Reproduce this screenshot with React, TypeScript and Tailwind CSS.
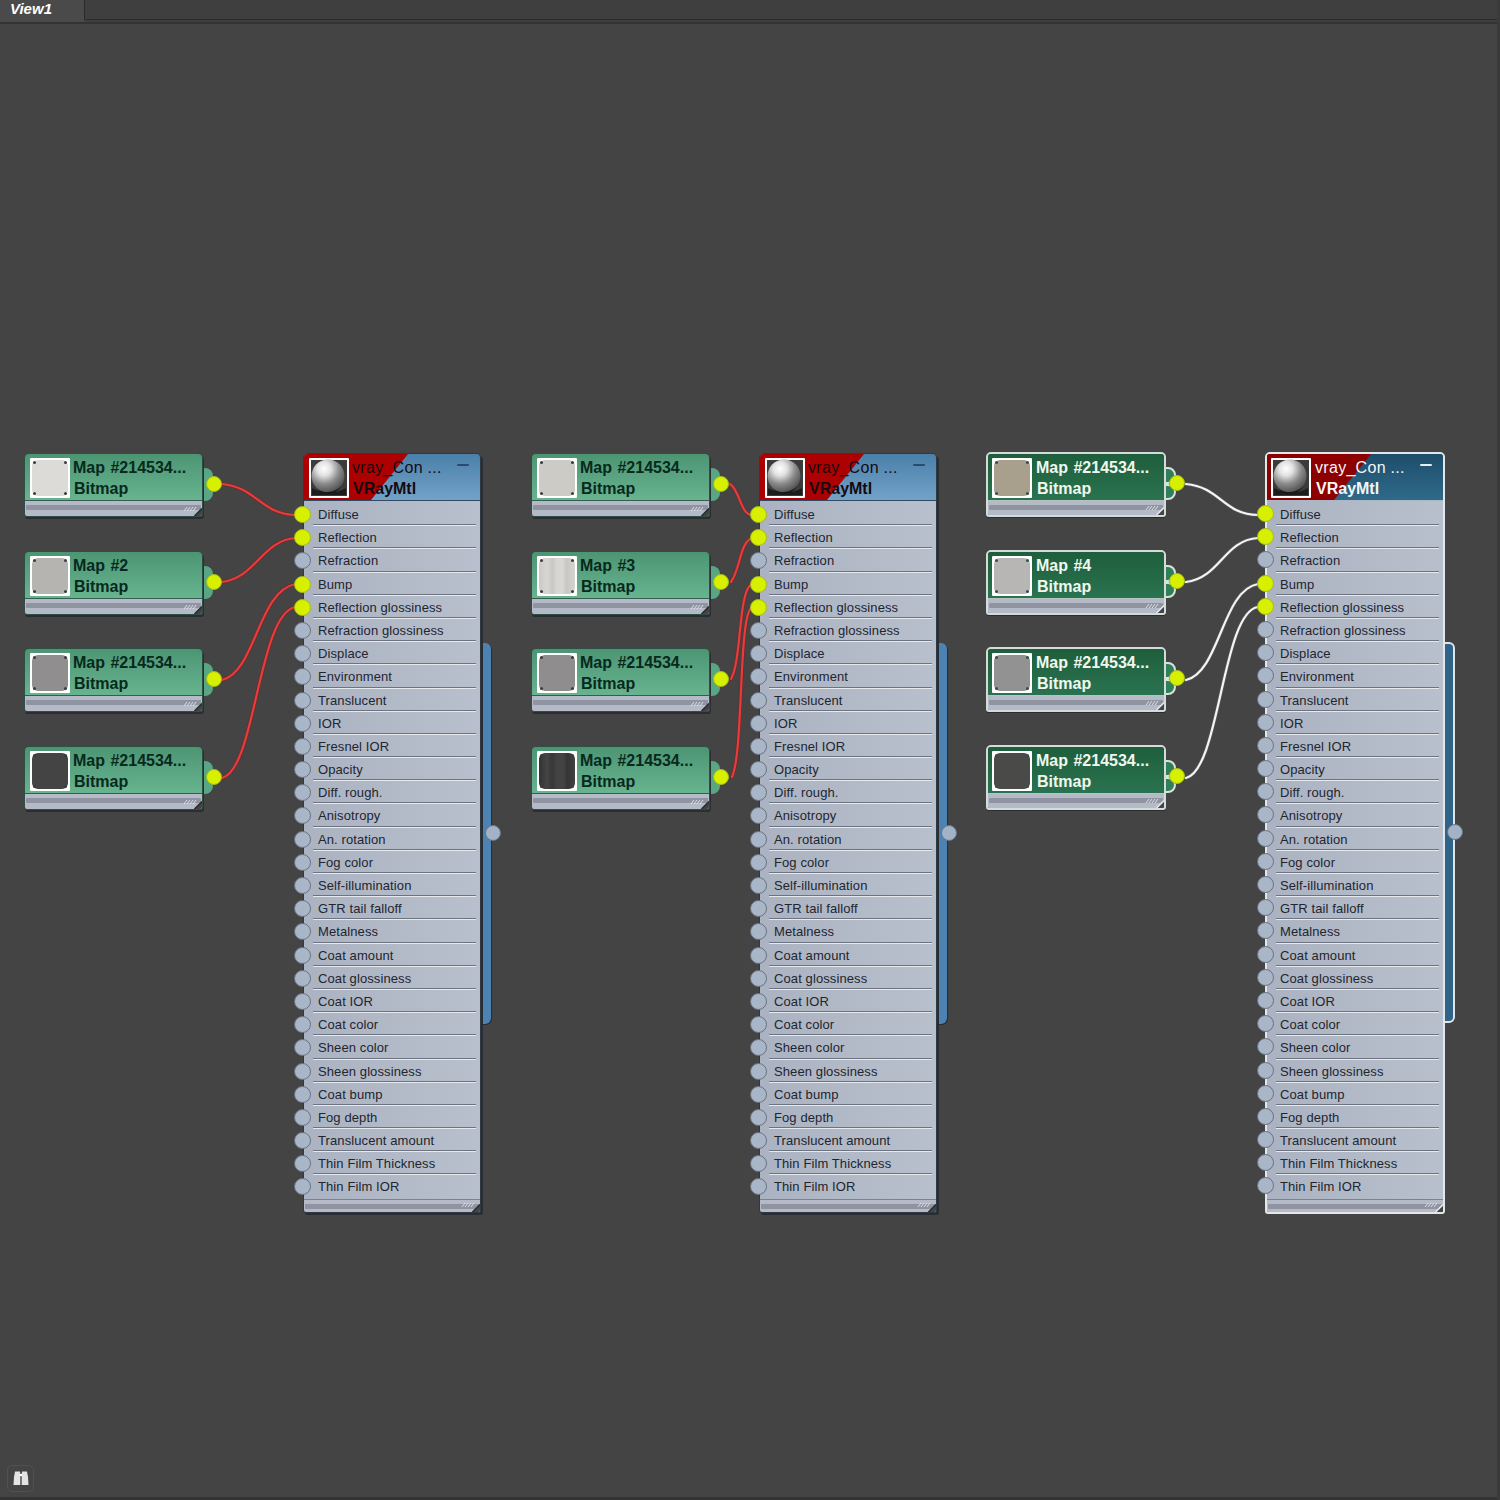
import React from "react";

const LABELS = ["Diffuse","Reflection","Refraction","Bump","Reflection glossiness","Refraction glossiness","Displace","Environment","Translucent","IOR","Fresnel IOR","Opacity","Diff. rough.","Anisotropy","An. rotation","Fog color","Self-illumination","GTR tail falloff","Metalness","Coat amount","Coat glossiness","Coat IOR","Coat color","Sheen color","Sheen glossiness","Coat bump","Fog depth","Translucent amount","Thin Film Thickness","Thin Film IOR"];
const CONNECTED = new Set([0, 1, 3, 4]);

type MapNodeData = { pos: string; title: string; thumb: string };
const MAPS_1: MapNodeData[] = [
  { pos: "left-[24px] top-[453px]", title: "Map #214534...", thumb: "bg-[#dddbd7]" },
  { pos: "left-[24px] top-[551px]", title: "Map #2", thumb: "bg-[#b6b4b1]" },
  { pos: "left-[24px] top-[648px]", title: "Map #214534...", thumb: "bg-[#918e90]" },
  { pos: "left-[24px] top-[746px]", title: "Map #214534...", thumb: "bg-[#454444]" },
];
const MAPS_2: MapNodeData[] = [
  { pos: "left-[531px] top-[453px]", title: "Map #214534...", thumb: "bg-[#cdcbc6]" },
  { pos: "left-[531px] top-[551px]", title: "Map #3", thumb: "bg-[linear-gradient(90deg,#cbc9c6_0%,#d9d7d4_22%,#cac8c5_38%,#d9d7d4_50%,#d9d7d4_66%,#c9c7c4_76%,#d6d4d1_100%)]" },
  { pos: "left-[531px] top-[648px]", title: "Map #214534...", thumb: "bg-[#8f8d8d]" },
  { pos: "left-[531px] top-[746px]", title: "Map #214534...", thumb: "bg-[linear-gradient(90deg,#333232_0%,#464545_22%,#383737_36%,#444343_50%,#444343_68%,#363535_78%,#424141_100%)]" },
];
const MAPS_3: MapNodeData[] = [
  { pos: "left-[986px] top-[452px]", title: "Map #214534...", thumb: "bg-[#a99f8d]" },
  { pos: "left-[986px] top-[550px]", title: "Map #4", thumb: "bg-[#b8b6b4]" },
  { pos: "left-[986px] top-[647px]", title: "Map #214534...", thumb: "bg-[#939292]" },
  { pos: "left-[986px] top-[745px]", title: "Map #214534...", thumb: "bg-[#4a4a48]" },
];

function Wire({ d, color, under }: { d: string; color: string; under: string }) {
  return (
    <g fill="none" strokeLinecap="round">
      <path d={d} stroke={under} strokeWidth={3.6} />
      <path d={d} stroke={color} strokeWidth={2.2} />
    </g>
  );
}

function Corners({ selected }: { selected?: boolean }) {
  const c = selected ? "bg-[#35504a]" : "bg-[#3a3f3c]";
  return (
    <>
      <span className={`absolute left-[3px] top-[3px] h-[3px] w-[3px] rounded-full ${c}`} />
      <span className={`absolute right-[3px] top-[3px] h-[3px] w-[3px] rounded-full ${c}`} />
      <span className={`absolute left-[3px] bottom-[3px] h-[3px] w-[3px] rounded-full ${c}`} />
      <span className={`absolute right-[3px] bottom-[3px] h-[3px] w-[3px] rounded-full ${c}`} />
    </>
  );
}

function Footer({ height, selected }: { height: string; selected?: boolean }) {
  return (
    <div className={`relative ${height} bg-[#b4bac7] px-[1px] pt-[4px]`}>
      <div className="h-[5px] rounded-[1px] bg-[#8f94a0]" />
      <svg className="absolute bottom-0 right-0" width="22" height="14" viewBox="0 0 22 14">
        <path d="M22 14V6L14 14Z" fill="#444445" />
        <path d="M14.5 14L22 6.5" stroke={selected ? "#e8ecef" : "#2c3034"} strokeWidth="1.6" />
        <path d="M4 9L7 5M7 9L10 5M10 9L13 5M13 9L16 5" stroke="#eef0f3" strokeWidth="0.9" opacity="0.9" />
      </svg>
    </div>
  );
}

function MapNode({ node, selected }: { node: MapNodeData; selected?: boolean }) {
  return (
    <div className={`absolute ${node.pos} ${selected ? "w-[180px]" : "w-[179px]"}`}>
      {/* output lobes behind the node */}
      <div className={`absolute right-[-10px] top-[15px] h-[17px] w-[14px] rounded-r-[8px] ${selected ? "border-2 border-[#d9e2de] bg-[#2f7f58]" : "bg-[#58a684]"}`} />
      <div className={`absolute right-[-10px] top-[32px] h-[16px] w-[14px] rounded-r-[8px] ${selected ? "border-2 border-[#d9e2de] bg-[#2f7f58]" : "bg-[#58a684]"}`} />
      <div className={`relative overflow-hidden rounded-t-[5px] rounded-b-[3px] ${selected ? "border-2 border-[#d3dcd8] shadow-[0_1px_0_#2b2d30]" : "border border-[#2f4f45] shadow-[1px_2px_0_#2b2d30]"}`}>
        <div className={`relative flex h-[47px] items-start border-b ${selected ? "border-[#b6c4bc] bg-[linear-gradient(180deg,#1e5e3c_0%,#2a7350_100%)]" : "border-[#355e50] bg-[linear-gradient(180deg,#4c9573_0%,#68b48f_100%)]"}`}>
          <div className={`relative mt-[4px] h-[40px] w-[40px] shrink-0 rounded-[1px] bg-white p-[2px] ${selected ? "ml-[4px]" : "ml-[5px]"}`}>
            <div className={`h-full w-full rounded-[6px] ${node.thumb}`} />
            <Corners selected={selected} />
          </div>
          <div className={`mt-[3px] text-[16px] font-bold leading-[21px] [word-spacing:1px] ${selected ? "ml-[4px] text-[#f1f7ee]" : "ml-[3px] text-[#08291d]"}`}>
            <div className="whitespace-nowrap">{node.title}</div>
            <div className="ml-[1px]">Bitmap</div>
          </div>
        </div>
        <Footer height={selected ? "h-[14px]" : "h-[15px]"} selected={selected} />
      </div>
      {/* output port */}
      <span className="absolute right-[-19px] top-[23px] h-[16px] w-[16px] rounded-full border border-[#a5bb18] bg-[#d6f000]" />
    </div>
  );
}

function Sphere({ id }: { id: string }) {
  return (
    <svg width="40" height="40" viewBox="0 0 40 40" className="relative rounded-[1px]">
      <defs>
        <radialGradient id={id} cx="38%" cy="28%" r="75%">
          <stop offset="0%" stopColor="#ffffff" />
          <stop offset="28%" stopColor="#e2e2e2" />
          <stop offset="62%" stopColor="#8a8a8a" />
          <stop offset="100%" stopColor="#4e4e4e" />
        </radialGradient>
      </defs>
      <rect width="40" height="40" fill="#ffffff" />
      <rect x="2" y="2" width="36" height="36" fill="#3b3b3b" />
      <path d="M3 30C12 36 28 36 37 30V37H3Z" fill="#1c1c1c" />
      <circle cx="19" cy="18" r="16.5" fill={`url(#${id})`} />
      <path d="M8 31C14 36 26 35 32 28C28 37 12 38 8 31Z" fill="#161616" />
    </svg>
  );
}

function Port({ on, selected }: { on: boolean; selected?: boolean }) {
  return (
    <span
      className={`absolute top-[3px] h-[17px] w-[17px] rounded-full border ${selected ? "left-[-8px]" : "left-[-9px]"} ${
        on ? "border-[#a5bb18] bg-[#d6f000]" : "border-[#667180] bg-[#a9b6c8]"
      }`}
    />
  );
}

function MaterialNode({ pos, id, selected }: { pos: string; id: string; selected?: boolean }) {
  return (
    <div className={`absolute ${pos} ${selected ? "w-[180px]" : "w-[178px]"}`}>
      {/* side tab */}
      <div className={`absolute right-[-10px] top-[190px] h-[381px] w-[12px] rounded-r-[6px] ${selected ? "border-2 border-[#dfe6ea] bg-[#2f6488]" : "bg-[#4d83b3] shadow-[1px_1px_0_#2b2d30]"}`} />
      <span className={`absolute top-[372px] h-[16px] w-[16px] rounded-full border border-[#6a7484] bg-[#a3b3c7] ${selected ? "right-[-18px]" : "right-[-20px]"}`} />
      <div className={`relative overflow-hidden rounded-t-[5px] rounded-b-[3px] ${selected ? "border-2 border-[#e2e7ea]" : "border border-[#2d3a45] shadow-[2px_2px_0_#2b2d30]"}`}>
        <div className={`relative h-[47px] border-b ${selected ? "border-[#a9b6c4] bg-[linear-gradient(180deg,#1e4d6b_0%,#2f6a8a_100%)]" : "border-[#2f4a62] bg-[linear-gradient(180deg,#4a80a9_0%,#73a2c8_100%)]"}`}>
          <div className={`absolute inset-0 [clip-path:polygon(0_0,104px_0,67px_100%,0_100%)] ${selected ? "bg-[#8d0000]" : "bg-[#ad0000]"}`} />
          <div className={`absolute top-[4px] h-[40px] w-[40px] ${selected ? "left-[4px]" : "left-[5px]"}`}>
            <Sphere id={id} />
          </div>
          <div className={`absolute left-[48px] top-[3px] text-[16px] leading-[21px] font-bold ${selected ? "text-[#f6f6f4]" : "text-[#160a10]"}`}>
            <div className="whitespace-nowrap font-normal tracking-[0.3px]">vray_Con ...</div>
            <div className="ml-[1px]">VRayMtl</div>
          </div>
          <span className={`absolute right-[11px] top-[10px] h-[2px] w-[12px] rounded-[1px] ${selected ? "bg-[#e8edf1]" : "bg-[#2a4a6e]"}`} />
        </div>
        <div className="bg-[linear-gradient(90deg,#abb3c2_0%,#b8c0cd_100%)] pt-[2px]">
          {LABELS.map((label, i) => (
            <div key={label} className={`relative h-[23.2px] ${selected ? "pl-[13px]" : "pl-[14px]"}`}>
              <div className="relative z-10 whitespace-nowrap text-[13px] leading-[23px] tracking-[0.1px] text-[#22252e]">{label}</div>
              {i < LABELS.length - 1 && (
                <div className="absolute bottom-0 left-[9px] right-[4px] h-[2px] border-b border-t border-b-[#e6e9ee] border-t-[#6d737f]" />
              )}
            </div>
          ))}
        </div>
        <div className="h-[1px] bg-[#7c828d]" />
        <Footer height="h-[12px]" selected={selected} />
      </div>
      {/* input ports: overlaid on the left edge, not clipped by the body */}
      <div className="absolute left-0 right-0 top-[50px]">
        {LABELS.map((label, i) => (
          <div key={label} className="relative h-[23.2px]">
            <Port on={CONNECTED.has(i)} selected={selected} />
          </div>
        ))}
      </div>
    </div>
  );
}

export default function App() {
  return (
    <div className="relative h-[1500px] w-[1500px] overflow-hidden bg-[#444445] font-['Liberation_Sans',Arial,sans-serif]">
      {/* top tab bar */}
      <div className="flex h-[24px] border-b-2 border-[#333333] bg-[#3f3f3f]">
        <div className="h-full w-[84px] bg-[#4a4a4a] pl-[10px] text-[15px] font-bold italic leading-[18px] text-white">View1</div>
        <div className="h-[20px] flex-1 border-b border-l border-[#2b2b2b]" />
      </div>

      {/* wires */}
      <svg className="absolute left-0 top-0" width="1500" height="1500" viewBox="0 0 1500 1500">
        <Wire color="#e73c3c" under="#6b2b2b" d="M222 484C256 487 262 515 296 515" />
        <Wire color="#e73c3c" under="#6b2b2b" d="M222 582C256 578 262 540 296 538" />
        <Wire color="#e73c3c" under="#6b2b2b" d="M222 680C256 672 258 590 296 584" />
        <Wire color="#e73c3c" under="#6b2b2b" d="M222 778C256 770 258 612 296 607" />
        <Wire color="#e73c3c" under="#6b2b2b" d="M730 484C740 490 740 514 752 515" />
        <Wire color="#e73c3c" under="#6b2b2b" d="M731 582C740 570 740 542 752 538" />
        <Wire color="#e73c3c" under="#6b2b2b" d="M731 679C742 660 738 590 752 584" />
        <Wire color="#e73c3c" under="#6b2b2b" d="M732 777C744 750 738 615 752 607" />
        <Wire color="#f4f4f4" under="#55585a" d="M1186 484C1220 487 1224 515 1258 515" />
        <Wire color="#f4f4f4" under="#55585a" d="M1186 582C1220 578 1224 540 1258 538" />
        <Wire color="#f4f4f4" under="#55585a" d="M1186 680C1220 672 1222 590 1258 584" />
        <Wire color="#f4f4f4" under="#55585a" d="M1186 778C1220 770 1222 612 1258 607" />
      </svg>

      {/* diagram nodes */}
      {MAPS_1.map((n, i) => <MapNode key={i} node={n} />)}
      {MAPS_2.map((n, i) => <MapNode key={i} node={n} />)}
      {MAPS_3.map((n, i) => <MapNode key={i} node={n} selected />)}
      <MaterialNode id="s1" pos="left-[303px] top-[453px]" />
      <MaterialNode id="s2" pos="left-[759px] top-[453px]" />
      <MaterialNode id="s3" pos="left-[1265px] top-[452px]" selected />

      {/* corner icon */}
      <div className="absolute bottom-[8px] left-[7px] flex h-[27px] w-[27px] items-center justify-center rounded-[5px] border border-[#515151]">
        <svg width="18" height="18" viewBox="0 0 18 18">
          <path d="M3 1.5H8L8.3 5V15H1.5L2 7Z" fill="#e4e4e4" />
          <path d="M10 1.5H15L16 7L16.5 15H9.7V5Z" fill="#e4e4e4" />
          <path d="M8 6H10V10H8Z" fill="#777777" />
          <circle cx="9" cy="5" r="1.3" fill="#ffffff" />
        </svg>
      </div>

      {/* window edges */}
      <div className="absolute bottom-0 left-0 right-0 h-[3px] bg-[#333333]" />
      <div className="absolute bottom-0 right-0 top-0 w-[3px] bg-[#3a3a3a]" />
    </div>
  );
}
